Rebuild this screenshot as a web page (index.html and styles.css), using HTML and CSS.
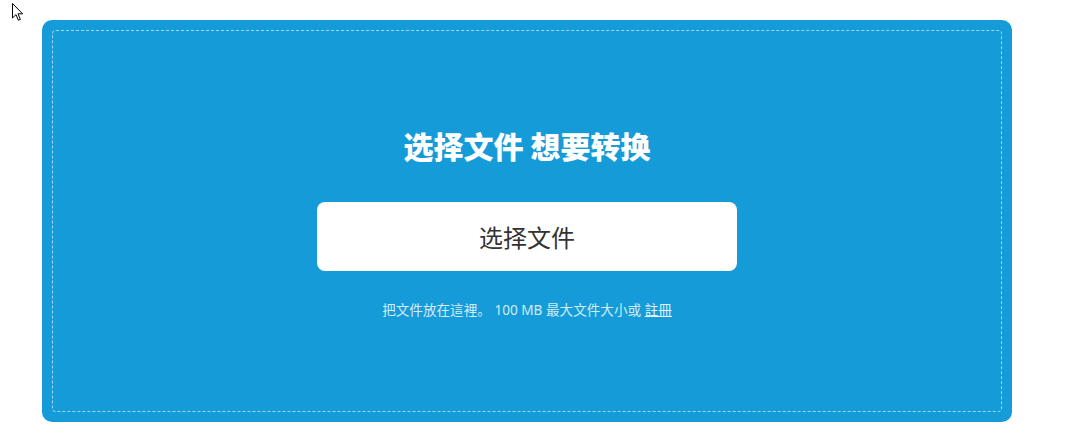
FILE: index.html
```html
<!DOCTYPE html>
<html lang="zh">
<head>
<meta charset="utf-8">
<title>选择文件</title>
<link rel="stylesheet" href="styles.css">
</head>
<body>
<svg class="cursor" width="13" height="20" viewBox="0 0 13 20" aria-hidden="true">
  <path d="M1.5 1.5 L1.5 16 L5 12.6 L7.4 18.3 L9.4 17.4 L7 11.8 L11.6 11.8 Z" fill="#fff" stroke="#000" stroke-width="1" stroke-linejoin="round"/>
</svg>
<main class="page">
  <section class="upload-card">
    <div class="drop-zone">
      <h1 class="title">选择文件 想要转换</h1>
      <button class="choose-btn" type="button">选择文件</button>
      <p class="hint">把文件放在這裡。 100 MB 最大文件大小或 <a class="signup" href="#">註冊</a></p>
    </div>
  </section>
</main>
</body>
</html>
```

FILE: styles.css
```css
html, body {
  margin: 0;
  padding: 0;
  background: #ffffff;
  font-family: "Noto Sans", "Noto Sans CJK SC", sans-serif;
}

.cursor {
  position: absolute;
  left: 11px;
  top: 2px;
}

.page {
  padding: 20px 0 0 42px;
}

.upload-card {
  width: 970px;
  height: 402px;
  box-sizing: border-box;
  background: #159cd8;
  border-radius: 10px;
  padding: 10px;
}

.drop-zone {
  height: 100%;
  box-sizing: border-box;
  border: 1px dashed rgba(255, 255, 255, 0.6);
  border-radius: 4px;
  display: flex;
  flex-direction: column;
  align-items: center;
  justify-content: center;
  padding-top: 3px;
}

.title {
  margin: 0;
  font-family: "Noto Sans CJK SC", sans-serif;
  font-size: 30px;
  line-height: 40px;
  font-weight: 900;
  color: #ffffff;
}

.choose-btn {
  margin-top: 37px;
  width: 420px;
  height: 69px;
  border: none;
  border-radius: 8px;
  background: #ffffff;
  color: #333333;
  font-family: "Noto Sans CJK SC", sans-serif;
  font-size: 24px;
  font-weight: 400;
  cursor: pointer;
}

.hint {
  margin: 29px 0 0;
  font-family: "Noto Sans", "Noto Sans CJK SC", sans-serif;
  font-size: 13.6px;
  line-height: 20px;
  color: rgba(255, 255, 255, 0.82);
}

.signup {
  color: rgba(255, 255, 255, 0.9);
  text-decoration: underline;
}
```
